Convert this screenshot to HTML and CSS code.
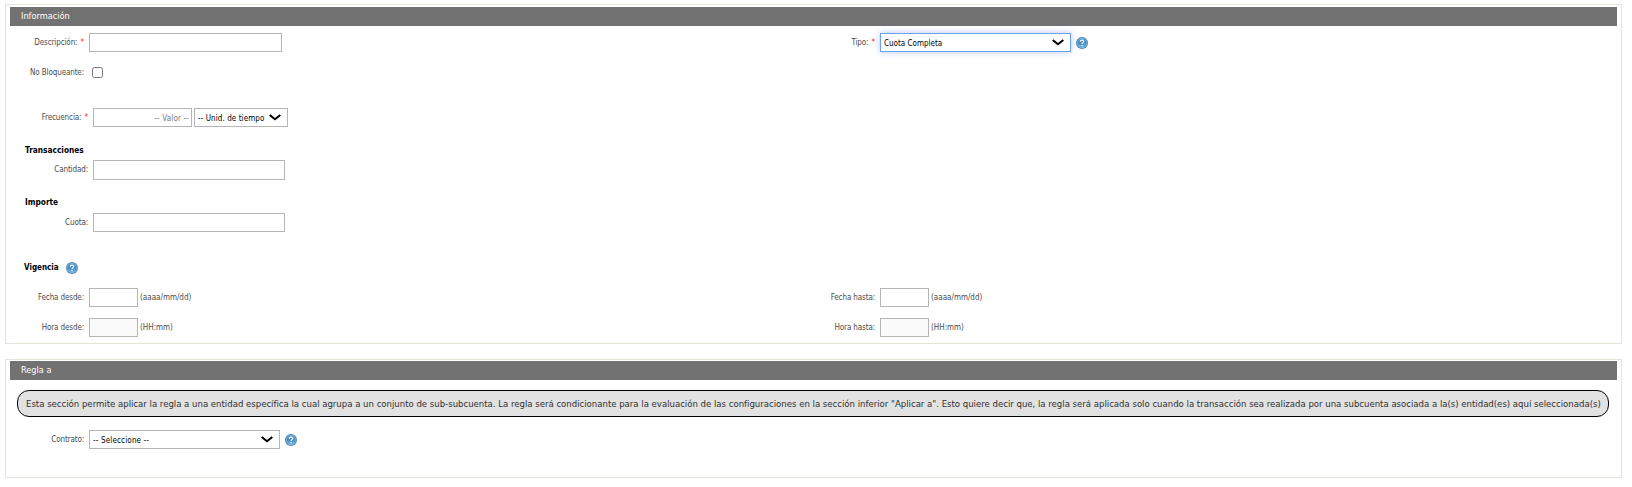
FILE: index.html
```
<!DOCTYPE html>
<html lang="es">
<head>
<meta charset="utf-8">
<title>Regla</title>
<link rel="stylesheet" href="styles.css">
</head>
<body>
<svg class="defs" aria-hidden="true">
  <defs>
    <linearGradient id="ball" x1="0" y1="0" x2="0" y2="1">
      <stop offset="0" stop-color="#5a9ac6"/>
      <stop offset=".5" stop-color="#4389c4"/>
      <stop offset="1" stop-color="#75bdeb"/>
    </linearGradient>
    <symbol id="help" viewBox="0 0 12 12">
      <circle cx="6" cy="6" r="6" fill="#4584b4"/>
      <circle cx="6" cy="6" r="4.8" fill="url(#ball)" stroke="#95c1df" stroke-width=".6"/>
      <path d="M4.3 4.7C4.3 2.7 7.7 2.7 7.7 4.6C7.7 5.7 6 5.7 6 7M6 8.1V9.2" fill="none" stroke="#f2f9ff" stroke-width="1.2"/>
    </symbol>
    <symbol id="arrow" viewBox="0 0 12 7">
      <path d="M.7 1L6 5.3L11.3 1" fill="none" stroke="#000" stroke-width="2"/>
    </symbol>
  </defs>
</svg>

<section class="panel panel-info">
  <h2 class="title">Información</h2>
  <div class="row row-first">
    <div class="field"><label class="label"><span>Descripción:</span><b class="req">*</b></label><input class="input wide" type="text"></div>
    <div class="field"><label class="label"><span>Tipo:</span><b class="req">*</b></label>
      <div class="select focused"><span>Cuota Completa</span><svg class="arrow"><use href="#arrow"/></svg></div>
      <svg class="help"><use href="#help"/></svg></div>
  </div>
  <div class="row row-check">
    <div class="field"><label class="label">No Bloqueante:</label><input class="check" type="checkbox"></div>
  </div>
  <div class="row row-freq">
    <div class="field inset"><label class="label"><span>Frecuencia:</span><b class="req">*</b></label>
      <input class="input value" type="text" placeholder="-- Valor --">
      <div class="select unit"><span>-- Unid. de tiempo</span><svg class="arrow"><use href="#arrow"/></svg></div></div>
  </div>
  <h3 class="subtitle sub-trans">Transacciones</h3>
  <div class="row">
    <div class="field inset"><label class="label">Cantidad:</label><input class="input amount tall" type="text"></div>
  </div>
  <h3 class="subtitle sub-importe">Importe</h3>
  <div class="row">
    <div class="field inset"><label class="label">Cuota:</label><input class="input amount" type="text"></div>
  </div>
  <h3 class="subtitle sub-vig">Vigencia <svg class="help"><use href="#help"/></svg></h3>
  <div class="row row-date">
    <div class="field"><label class="label">Fecha desde:</label><input class="input short" type="text"><span class="hint">(aaaa/mm/dd)</span></div>
    <div class="field"><label class="label">Fecha hasta:</label><input class="input short" type="text"><span class="hint">(aaaa/mm/dd)</span></div>
  </div>
  <div class="row row-time">
    <div class="field"><label class="label">Hora desde:</label><input class="input short" type="text" disabled><span class="hint">(HH:mm)</span></div>
    <div class="field"><label class="label">Hora hasta:</label><input class="input short" type="text" disabled><span class="hint">(HH:mm)</span></div>
  </div>
</section>

<section class="panel panel-rule">
  <h2 class="title">Regla a</h2>
  <p class="note">Esta sección permite aplicar la regla a una entidad específica la cual agrupa a un conjunto de sub-subcuenta. La regla será condicionante para la evaluación de las configuraciones en la sección inferior "Aplicar a". Esto quiere decir que, la regla será aplicada solo cuando la transacción sea realizada por una subcuenta asociada a la(s) entidad(es) aquí seleccionada(s)</p>
  <div class="row">
    <div class="field"><label class="label">Contrato:</label>
      <div class="select contract"><span>-- Seleccione --</span><svg class="arrow"><use href="#arrow"/></svg></div>
      <svg class="help"><use href="#help"/></svg></div>
  </div>
</section>
</body>
</html>
```
FILE: styles.css
```
* { box-sizing: border-box; }
body {
  margin: 0;
  padding: 4px 10px 0 5px;
  background: #fff;
  color: #4c4c4c;
  font: 8px/10px "DejaVu Sans Condensed", "DejaVu Sans", sans-serif;
}
.defs { display: block; width: 0; height: 0; }
.panel { border: 1px solid #e4e4da; }
.panel-info { height: 340px; padding: 2px 4px 0; }
.panel-rule { height: 119px; margin-top: 15px; padding: 1px 4px 0; }
.title {
  height: 19px;
  margin: 0;
  padding-left: 11px;
  background: #727272;
  color: #fff;
  font-size: 9.1px;
  font-weight: 400;
  line-height: 19px;
}
.row { display: grid; grid-template-columns: 791px 1fr; }
.row-first { margin-top: 7px; }
.row-check { margin-top: 15px; }
.row-freq { margin-top: 30px; }
.row-date { margin-top: 14px; }
.row-time { margin-top: 11px; }
.field { display: flex; align-items: center; }
.label {
  display: flex;
  justify-content: flex-end;
  gap: 3px;
  width: 74px;
  margin-right: 5px;
  white-space: nowrap;
  letter-spacing: -.12px;
}
.inset .label { width: 78px; }
.row-check .label { line-height: 11px; }
.req { color: #f22; font-weight: 400; letter-spacing: 0; }
.input {
  height: 19px;
  margin: 0;
  padding: 0 2px;
  border: 1px solid #b5b5b5;
  border-radius: 0;
  background: #fff;
  font: inherit;
}
.input:disabled { background: #fafafa; }
.input::placeholder { color: #757575; opacity: 1; }
.wide { width: 193px; }
.amount { width: 192px; }
.tall { height: 20px; }
.value { width: 99px; margin-right: 2px; padding-top: 2px; text-align: right; letter-spacing: .15px; }
.short { width: 49px; }
.hint { margin-left: 2px; }
.check { width: 11px; height: 11px; margin: 0 0 0 3px; }
.select {
  display: flex;
  align-items: center;
  justify-content: space-between;
  width: 191px;
  height: 19px;
  padding: 2px 6px 0 3px;
  border: 1px solid #b5b5b5;
  background: #fff;
  color: #000;
  white-space: nowrap;
}
.contract { letter-spacing: .15px; }
.unit { width: 94px; letter-spacing: .08px; }
.focused { border-color: #6f9fe6; box-shadow: 0 0 6px rgba(100, 150, 235, .5); }
.arrow { width: 12px; height: 7px; margin-top: -2px; }
.help { width: 12px; height: 12px; margin-left: 5px; }
.subtitle {
  display: flex;
  align-items: center;
  margin: 0 0 0 15px;
  color: #000;
  font-size: 8.25px;
  line-height: 10px;
}
.sub-trans { margin-top: 18px; margin-bottom: 5px; }
.sub-importe { margin-top: 17px; margin-bottom: 6px; }
.sub-vig { margin-top: 30px; margin-left: 14px; font-size: 8px; }
.sub-vig .help { margin-left: 7px; }
.note {
  height: 27px;
  margin: 10px 8px 13px 7px;
  padding-left: 8px;
  border: 1px solid #000;
  border-radius: 12px;
  background: #e2e2e2;
  color: #303030;
  font-size: 9.5px;
  line-height: 25px;
  letter-spacing: -.004px;
  white-space: nowrap;
}
```
